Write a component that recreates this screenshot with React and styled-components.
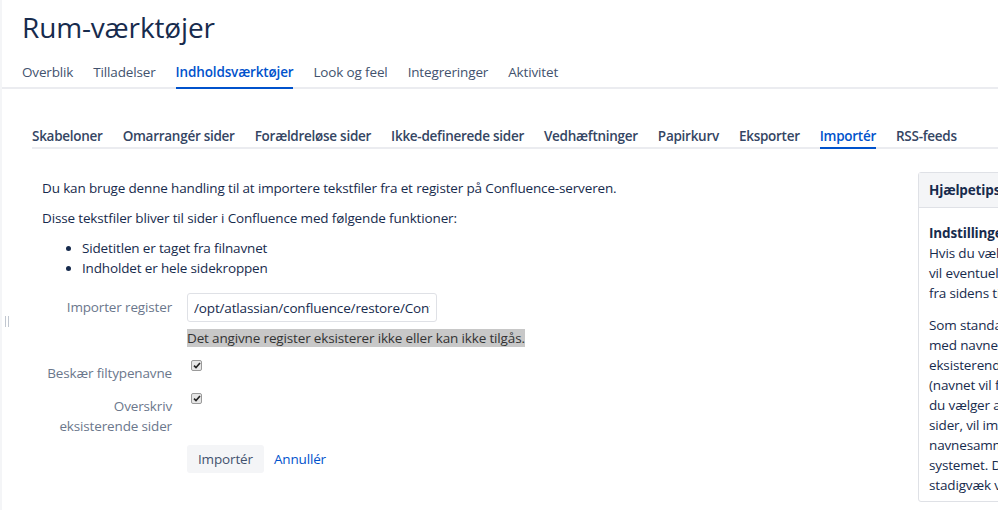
import React from "react"
import styled, { createGlobalStyle } from "styled-components"

const GlobalStyle = createGlobalStyle`
  body {
    margin: 0;
    background: #fff;
    color: #172b4d;
    font-family: "Open Sans", "Noto Sans", sans-serif;
    font-size: 13.5px;
    letter-spacing: -0.15px;
    overflow: hidden;
  }
`

const Page = styled.div`
  position: relative;
  min-height: 510px;
  border-left: 2px solid #f4f5f7;
  overflow: hidden;
`

const Grip = styled.span`
  position: absolute;
  left: 3px;
  top: 316px;
  width: 2px;
  height: 11px;
  border-left: 1px solid #c1c7d0;
  border-right: 1px solid #c1c7d0;
`

const Title = styled.h1`
  margin: 0;
  padding: 9px 20px 0;
  font-size: 28px;
  line-height: 36px;
  font-weight: 500;
  color: #172b4d;
`

const TopNav = styled.nav`
  display: flex;
  gap: 20px;
  padding: 17px 20px 0;
  border-bottom: 2px solid #ebecf0;
`

const TopTab = styled.a`
  line-height: 20px;
  padding-bottom: 5px;
  margin-bottom: -2px;
  border-bottom: 2px solid ${p => (p.$active ? "#0052cc" : "transparent")};
  color: ${p => (p.$active ? "#0052cc" : "#42526e")};
  font-weight: ${p => (p.$active ? 600 : 400)};
  white-space: nowrap;
`

const Content = styled.div`
  padding-left: 30px;
`

const SubNav = styled.nav`
  display: flex;
  gap: 20px;
  margin-top: 36px;
  border-bottom: 2px solid #ebecf0;
`

const SubTab = styled.a`
  line-height: 20px;
  padding: 1px 0 1px;
  margin-bottom: -2px;
  border-bottom: 2px solid ${p => (p.$active ? "#0052cc" : "transparent")};
  color: ${p => (p.$active ? "#0052cc" : "#344563")};
  font-weight: 600;
  letter-spacing: -0.27px;
  white-space: nowrap;
`

const Body = styled.div`
  display: flex;
  align-items: flex-start;
  margin-top: 23px;
`

const Main = styled.div`
  flex: 0 0 876px;
  padding: 6px 0 0 10px;
`

const Para = styled.p`
  margin: 0 0 10px;
  line-height: 20px;
`

const List = styled.ul`
  margin: 0;
  padding-left: 40px;
  line-height: 20px;
`

const Form = styled.form`
  margin-top: 15px;
  display: grid;
  grid-template-columns: 130px 1fr;
  column-gap: 15px;
  align-items: start;
`

const Label = styled.label`
  text-align: right;
  color: #6b778c;
  line-height: 20px;
  padding-top: ${p => p.$top || 0}px;
  margin-top: ${p => p.$gap || 0}px;
`

const Field = styled.div`
  margin-top: ${p => p.$gap || 0}px;
  display: flex;
  flex-direction: column;
  align-items: flex-start;
`

const TextInput = styled.input`
  box-sizing: border-box;
  width: 250px;
  height: 29px;
  padding: 0 6px;
  border: 1px solid #dfe1e6;
  border-radius: 3px;
  font: inherit;
  letter-spacing: inherit;
  color: #172b4d;
  outline: none;
`

const ErrorText = styled.span`
  margin-top: 7px;
  background: #c8c8c8;
  color: #333;
  line-height: 18px;
  white-space: nowrap;
`

const Check = styled.span`
  box-sizing: border-box;
  display: flex;
  align-items: center;
  justify-content: center;
  width: 11px;
  height: 11px;
  margin: 3px 0 0 4px;
  background: #e6e6e6;
  border: 1px solid #9a9a9a;
  border-radius: 2px;
`

const Actions = styled.div`
  grid-column: 2;
  margin-top: 9px;
  display: flex;
  align-items: center;
  gap: 10px;
`

const Button = styled.button`
  height: 28px;
  padding: 0 11px;
  border: none;
  border-radius: 3px;
  background: #f4f5f7;
  color: #42526e;
  font: inherit;
  letter-spacing: inherit;
`

const Link = styled.a`
  color: #0052cc;
`

const Help = styled.aside`
  flex: 0 0 300px;
  border: 1px solid #dfe1e6;
  border-radius: 3px;
`

const HelpHead = styled.div`
  padding: 7px 10px;
  line-height: 20px;
  font-weight: 700;
  background: #f4f5f7;
  border-bottom: 1px solid #dfe1e6;
`

const HelpBody = styled.div`
  padding: 15px 10px 6px;
  line-height: 20px;
  white-space: nowrap;
`

const HelpPara = styled.p`
  margin: 0 0 12px;
  &:last-child {
    margin-bottom: 0;
  }
`

const CheckMark = () => (
  <svg width="8" height="7" viewBox="0 0 8 7">
    <path d="M1 3.6 L3 5.6 L7 1" fill="none" stroke="#222" strokeWidth="1.6" />
  </svg>
)

const topTabs = ["Overblik", "Tilladelser", "Indholdsværktøjer", "Look og feel", "Integreringer", "Aktivitet"]
const subTabs = [
  "Skabeloner",
  "Omarrangér sider",
  "Forældreløse sider",
  "Ikke-definerede sider",
  "Vedhæftninger",
  "Papirkurv",
  "Eksporter",
  "Importér",
  "RSS-feeds",
]

export default function App() {
  return (
    <Page>
      <GlobalStyle />
      <Grip />
      <Title>Rum-værktøjer</Title>
      <TopNav>
        {topTabs.map(t => (
          <TopTab key={t} $active={t === "Indholdsværktøjer"}>{t}</TopTab>
        ))}
      </TopNav>
      <Content>
        <SubNav>
          {subTabs.map(t => (
            <SubTab key={t} $active={t === "Importér"}>{t}</SubTab>
          ))}
        </SubNav>
        <Body>
          <Main>
            <Para>Du kan bruge denne handling til at importere tekstfiler fra et register på Confluence-serveren.</Para>
            <Para>Disse tekstfiler bliver til sider i Confluence med følgende funktioner:</Para>
            <List>
              <li>Sidetitlen er taget fra filnavnet</li>
              <li>Indholdet er hele sidekroppen</li>
            </List>
            <Form>
              <Label $top={4}>Importer register</Label>
              <Field>
                <TextInput defaultValue="/opt/atlassian/confluence/restore/Confluence" />
                <ErrorText>Det angivne register eksisterer ikke eller kan ikke tilgås.</ErrorText>
              </Field>
              <Label $top={6} $gap={10}>Beskær filtypenavne</Label>
              <Field $gap={10}>
                <Check><CheckMark /></Check>
              </Field>
              <Label $top={6} $gap={7}>Overskriv eksisterende sider</Label>
              <Field $gap={7}>
                <Check><CheckMark /></Check>
              </Field>
              <Actions>
                <Button type="button">Importér</Button>
                <Link>Annullér</Link>
              </Actions>
            </Form>
          </Main>
          <Help>
            <HelpHead>Hjælpetips</HelpHead>
            <HelpBody>
              <HelpPara>
                <b>Indstillinger</b>
                <br />
                Hvis du vælger at beskære filtypenavne,
                <br />
                vil eventuelle filtypenavne blive fjernet
                <br />
                fra sidens titel.
              </HelpPara>
              <HelpPara>
                Som standard, hvis der allerede findes en side
                <br />
                med navnet, vil en ny side med et
                <br />
                eksisterende navn få et andet navn
                <br />
                (navnet vil få et suffiks). Hvis
                <br />
                du vælger at overskrive eksisterende
                <br />
                sider, vil importen overskrive sider med
                <br />
                navnesammenfald i
                <br />
                systemet. De overskrevne sider vil
                <br />
                stadigvæk være versioneret.
              </HelpPara>
            </HelpBody>
          </Help>
        </Body>
      </Content>
    </Page>
  )
}
